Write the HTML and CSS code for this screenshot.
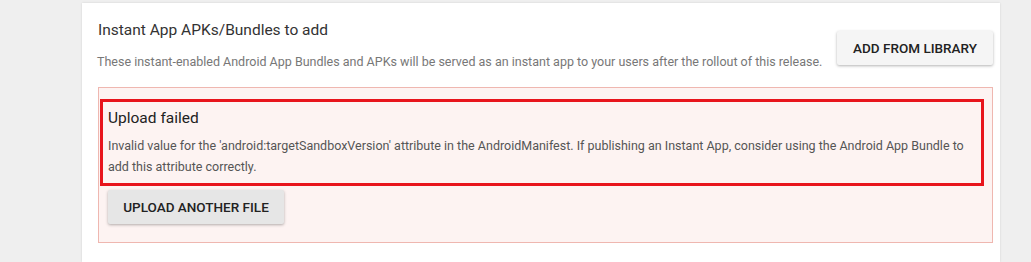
FILE: index.html
```html
<!DOCTYPE html>
<html lang="en">
<head>
<meta charset="UTF-8" />
<meta name="viewport" content="width=device-width, initial-scale=1.0" />
<title>Instant App APKs</title>
<link rel="stylesheet" href="styles.css">
</head>
<body>

<div class="card">
  <div class="card-header">
    <div class="header-text">
      <h2>Instant App APKs/Bundles to add</h2>
      <p class="hint">These instant-enabled Android App Bundles and APKs will be served as an instant app to your users after the rollout of this release.</p>
    </div>
    <button class="btn btn-library" type="button">Add from library</button>
  </div>

  <div class="upload-error">
    <div class="error-message">
      <h3>Upload failed</h3>
      <p>Invalid value for the 'android:targetSandboxVersion' attribute in the AndroidManifest. If publishing an Instant App, consider using the Android App Bundle to add this attribute correctly.</p>
    </div>
    <button class="btn btn-retry" type="button">Upload another file</button>
  </div>
</div>

</body>
</html>
```

FILE: styles.css
```css
body {
  margin: 0;
  background-color: #efefef;
  font-family: Roboto, "Liberation Sans", Arial, sans-serif;
  color: #333;
  overflow: hidden;
}

.card {
  margin: 3px 0 0 82px;
  width: 918px;
  height: 259px;
  box-sizing: border-box;
  padding: 17px 7px 0 16px;
  background-color: #fff;
  box-shadow: 0 0 2px rgba(0, 0, 0, 0.12);
}

.card-header {
  display: flex;
  justify-content: space-between;
  align-items: flex-start;
}

h2 {
  margin: 0;
  font-size: 15.5px;
  font-weight: 400;
  line-height: 20px;
  color: #333;
}

.hint {
  margin: 14px 0 0 -1px;
  font-size: 12.5px;
  line-height: 16px;
  color: #777;
}

.btn {
  border: none;
  border-radius: 2px;
  padding: 0 12px;
  height: 34px;
  font-family: inherit;
  font-size: 13.5px;
  font-weight: 500;
  text-transform: uppercase;
  color: #222;
  cursor: pointer;
  box-shadow: 0 1px 3px rgba(0, 0, 0, 0.3);
}

.btn-library {
  margin-top: 11px;
  width: 156px;
  background-color: #f5f5f5;
}

.upload-error {
  margin-top: 17px;
  height: 156px;
  box-sizing: border-box;
  padding: 11px 8px 0 1px;
  background-color: #fdf3f2;
  border: 1px solid #efb7b0;
}

.error-message {
  padding: 6px 8px 6px 5px;
  border: 3px solid #e8141c;
}

h3 {
  margin: 0;
  font-size: 15.5px;
  font-weight: 400;
  line-height: 20px;
  color: #222;
}

.error-message p {
  margin: 7px 0 0;
  font-size: 12.5px;
  line-height: 21px;
  color: #555;
}

.btn-retry {
  margin: 4px 0 0 8px;
  width: 176px;
  background-color: #e6e6e6;
}
```
